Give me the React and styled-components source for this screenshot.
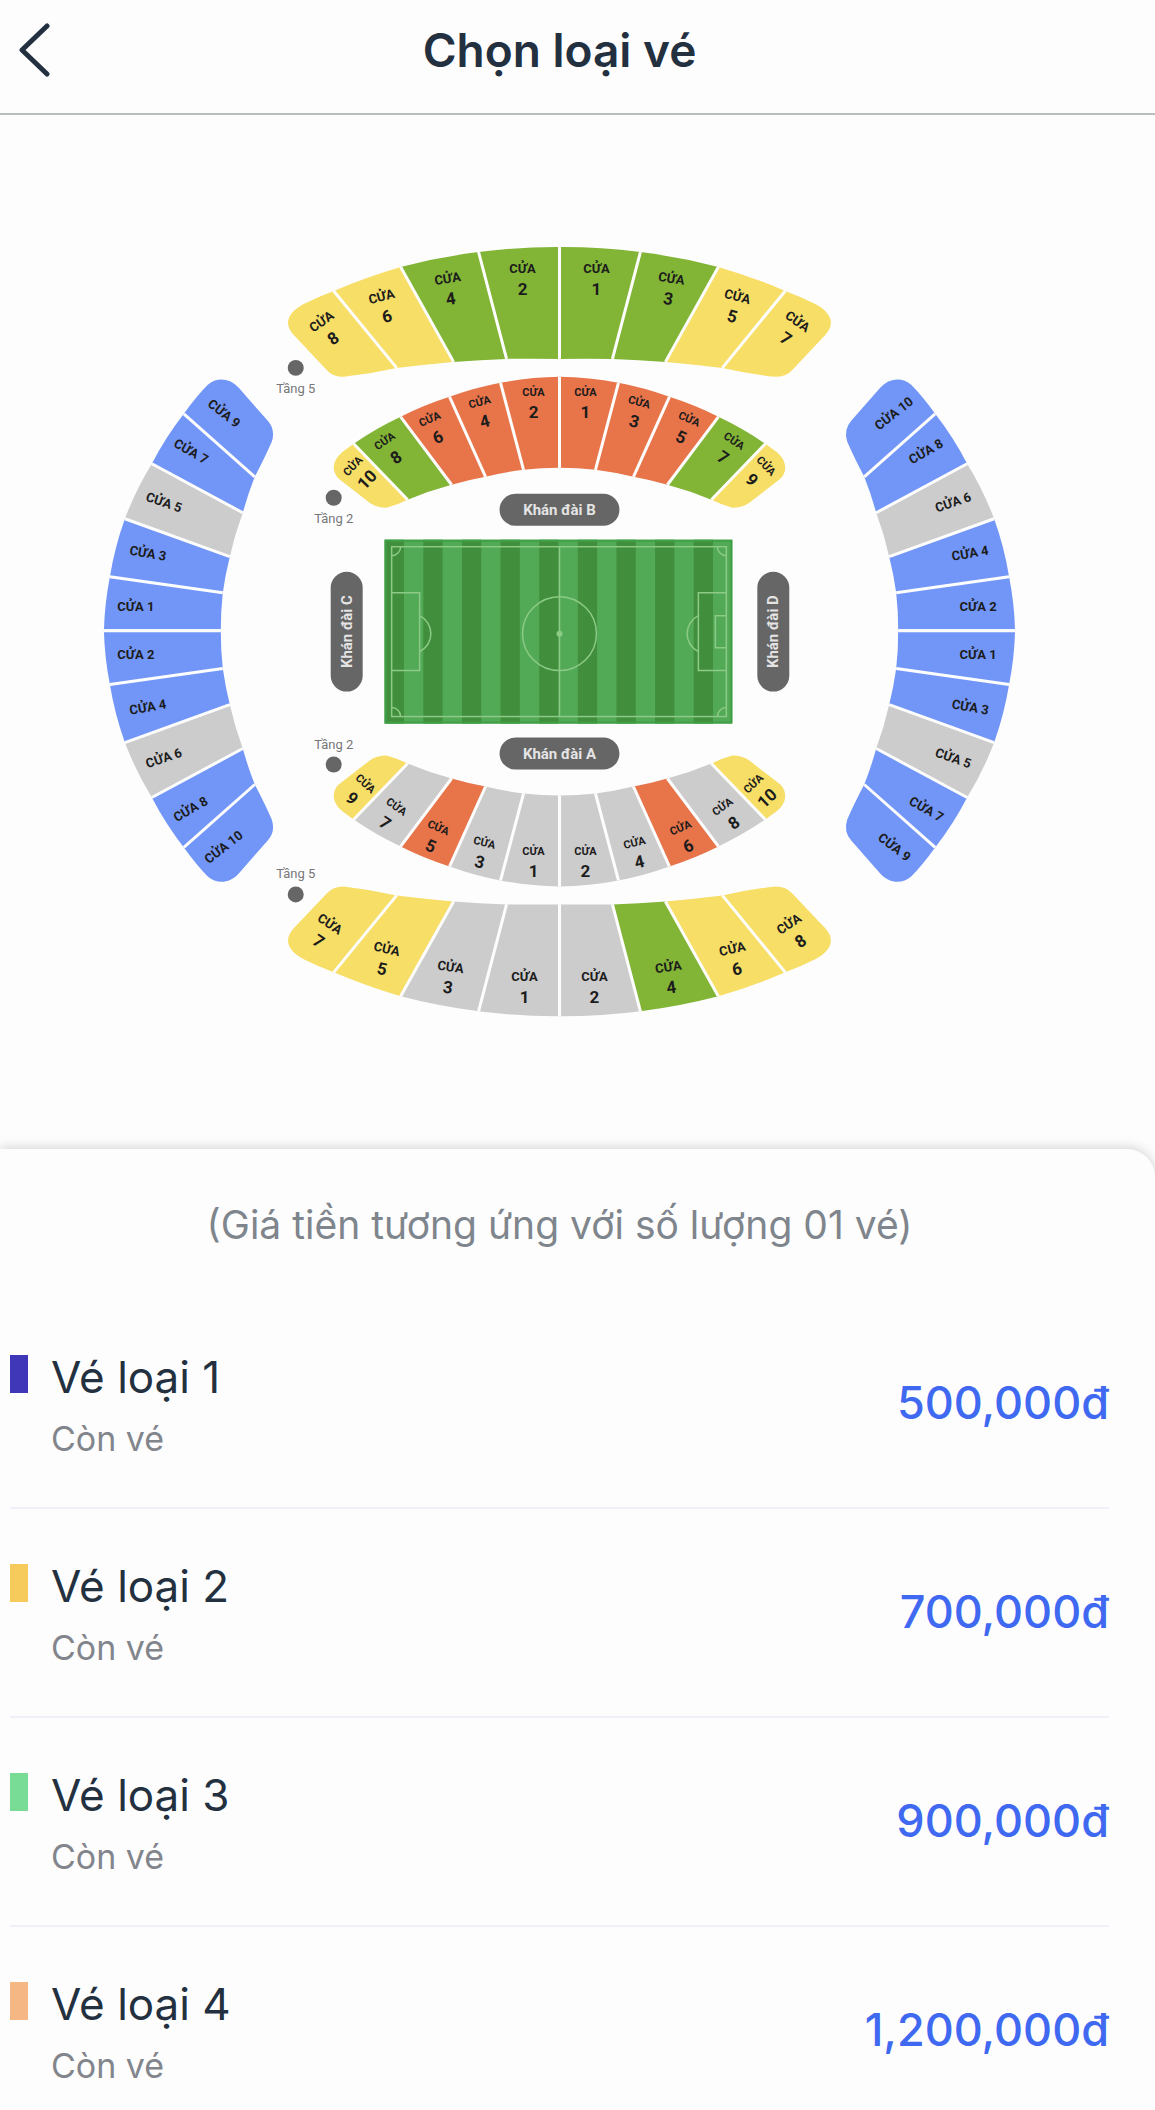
import React from "react";
import styled, { createGlobalStyle } from "styled-components";

const GREEN = "#82b536";
const YELLOW = "#f7de67";
const ORANGE = "#e8744a";
const BLUE = "#7296f7";
const GREY = "#cccccc";

const tickets = [
  { name: "Vé loại 1", status: "Còn vé", price: "500,000đ", color: "#3f37b8" },
  { name: "Vé loại 2", status: "Còn vé", price: "700,000đ", color: "#f6cb5c" },
  { name: "Vé loại 3", status: "Còn vé", price: "900,000đ", color: "#78dc96" },
  { name: "Vé loại 4", status: "Còn vé", price: "1,200,000đ", color: "#f5b783" },
];

// Every shape holds the left (or top left) half of a stand, around the
// centre of the pitch. The other halves are its mirror images.
const outerStand = {
  outer: [[0, -385], [-81, -380], [-159, -365], [-226, -341]],
  inner: [[0, -273], [-53, -273], [-106, -270], [-163, -264]],
  outerR: 610,
  innerR: 1700,
  end: "M-226 -341 Q-242 -335 -256 -328 C-271 -320 -277 -309 -266 -297 L-233 -262 Q-227 -255 -216 -255 Q-190 -258 -163 -264 Z",
};

const innerStand = {
  outer: [[0, -255], [-59, -249], [-110, -235], [-159, -215], [-206, -188]],
  inner: [[0, -164], [-36, -162], [-74, -155], [-108, -147], [-152, -132]],
  outerR: 330,
  innerR: 350,
  end: "M-206 -188 L-217 -180 C-227 -172 -229 -161 -221 -153 L-190 -129 Q-183 -124 -173 -124 Q-162 -127 -152 -132 Z",
};

const sideStand = {
  outer: [[-456, 0], [-450, -54], [-435, -112], [-408, -167], [-376, -217]],
  inner: [[-339, 0], [-337, -38], [-330, -74], [-317, -118], [-305, -154]],
  outerR: 325,
  innerR: 340,
  end: "M-376 -217 Q-363 -235 -352 -246 C-343 -254 -330 -253 -321 -243 L-292 -210 Q-284 -201 -288 -189 Q-295 -173 -305 -154 Z",
};

// Label slots, from the middle outwards: x, y, rotation
const outerTopSlots = [[-37, -363, 0], [-112, -353, -9], [-178, -335, -15], [-238, -310, -35]];
const innerTopSlots = [[-26, -240, 0], [-80, -230, -15], [-130, -213, -24], [-175, -191, -34], [-207, -166, -46]];
const outerBottomSlots = [[-35, 346, 0], [-109, 336, 8], [-173, 318, 13], [-230, 293, 34]];
const innerBottomSlots = [[-26, 220, 0], [-75, 211, 14], [-121, 196, 23], [-163, 175, 35], [-194, 152, 43]];
const leftSlots = [[-424, -24, 0], [-412, -77, 10], [-396, -128, 19], [-369, -179, 30], [-336, -217, 38]];
const rightSlots = [[419, -24, 0], [411, -77, -10], [394, -128, -19], [367, -179, -30], [335, -217, -38]];

const quarters = [
  { stand: outerStand, slots: outerTopSlots, gates: [2, 4, 6, 8], colors: [GREEN, GREEN, YELLOW, YELLOW] },
  { stand: outerStand, slots: outerTopSlots, gates: [1, 3, 5, 7], colors: [GREEN, GREEN, YELLOW, YELLOW], right: true },
  { stand: innerStand, slots: innerTopSlots, small: true, gates: [2, 4, 6, 8, 10], colors: [ORANGE, ORANGE, ORANGE, GREEN, YELLOW] },
  { stand: innerStand, slots: innerTopSlots, small: true, gates: [1, 3, 5, 7, 9], colors: [ORANGE, ORANGE, ORANGE, GREEN, YELLOW], right: true },
  { stand: innerStand, slots: innerBottomSlots, small: true, gates: [1, 3, 5, 7, 9], colors: [GREY, GREY, ORANGE, GREY, YELLOW], bottom: true },
  { stand: innerStand, slots: innerBottomSlots, small: true, gates: [2, 4, 6, 8, 10], colors: [GREY, GREY, ORANGE, GREY, YELLOW], bottom: true, right: true },
  { stand: outerStand, slots: outerBottomSlots, gates: [1, 3, 5, 7], colors: [GREY, GREY, YELLOW, YELLOW], bottom: true },
  { stand: outerStand, slots: outerBottomSlots, gates: [2, 4, 6, 8], colors: [GREY, GREEN, YELLOW, YELLOW], bottom: true, right: true },
];

const sideColors = [BLUE, BLUE, GREY, BLUE, BLUE];
const sides = [
  { slots: leftSlots, gates: [1, 3, 5, 7, 9] },
  { slots: leftSlots, gates: [2, 4, 6, 8, 10], bottom: true },
  { slots: rightSlots, gates: [2, 4, 6, 8, 10], right: true },
  { slots: rightSlots, gates: [1, 3, 5, 7, 9], right: true, bottom: true },
];

const floors = [
  { label: "Tầng 5", x: -264, dot: -264, text: -239 },
  { label: "Tầng 2", x: -226, dot: -134, text: -109 },
  { label: "Tầng 2", x: -226, dot: 133, text: 117 },
  { label: "Tầng 5", x: -264, dot: 263, text: 247 },
];

function cellPath({ outer, inner, outerR, innerR }, i, sweep) {
  const [a, b] = [outer[i], outer[i + 1]];
  const [c, d] = [inner[i + 1], inner[i]];
  return `M${a} A${outerR} ${outerR} 0 0 ${sweep} ${b} L${c} A${innerR} ${innerR} 0 0 ${1 - sweep} ${d} Z`;
}

function StandShape({ stand, colors, right, bottom, sweep = 0 }) {
  const last = colors.length - 1;
  return (
    <g transform={`scale(${right ? -1 : 1} ${bottom ? -1 : 1})`}>
      {colors.map((color, i) => (
        <path key={i} fill={color} d={i === last ? stand.end : cellPath(stand, i, sweep)} />
      ))}
      {stand.outer.map(([x, y], i) => (
        <Divider key={i} x1={x} y1={y} x2={stand.inner[i][0]} y2={stand.inner[i][1]} />
      ))}
    </g>
  );
}

function StadiumMap() {
  return (
    <Map viewBox="-560 -400 1120 800" role="img" aria-label="Sơ đồ sân">
      {quarters.map((q, i) => (
        <g key={i}>
          <StandShape {...q} />
          {q.gates.map((gate, n) => {
            const [x, y, angle] = q.slots[n];
            const side = q.right ? -1 : 1;
            return (
              <g key={gate} transform={`translate(${x * side} ${y}) rotate(${angle * side})`}>
                <GateText $small={q.small} y="4">CỬA</GateText>
                <GateNumber y="26">{gate}</GateNumber>
              </g>
            );
          })}
        </g>
      ))}

      <g transform="translate(0 -1)">
        {sides.map((s, i) => (
          <g key={i}>
            <StandShape stand={sideStand} colors={sideColors} right={s.right} bottom={s.bottom} sweep={1} />
            {s.gates.map((gate, n) => {
              const [x, y, angle] = s.slots[n];
              const side = s.bottom ? -1 : 1;
              return (
                <g key={gate} transform={`translate(${x} ${y * side}) rotate(${angle * side})`}>
                  <GateText y="4">{`CỬA ${gate}`}</GateText>
                </g>
              );
            })}
          </g>
        ))}
      </g>

      {floors.map((f) => (
        <g key={f.dot}>
          <circle cx={f.x} cy={f.dot} r="8" fill="#666666" />
          <FloorText x={f.x} y={f.text}>{f.label}</FloorText>
        </g>
      ))}

      <StandName x={0} y={-122} label="Khán đài B" />
      <StandName x={0} y={122} label="Khán đài A" />
      <StandName x={-213} y={0} label="Khán đài C" upright />
      <StandName x={214} y={0} label="Khán đài D" upright />
      <Pitch />
    </Map>
  );
}

function StandName({ x, y, label, upright }) {
  return (
    <g transform={`translate(${x} ${y}) rotate(${upright ? -90 : 0})`}>
      <rect x="-60" y="-16" width="120" height="32" rx="16" fill="#666666" />
      <StandText y="5">{label}</StandText>
    </g>
  );
}

function Pitch() {
  const stripe = 348 / 18;
  return (
    <g transform="translate(-175 -92)">
      <rect width="348" height="184" fill="#52aa57" />
      {Array.from({ length: 9 }, (_, i) => (
        <rect key={i} x={i * 2 * stripe} width={stripe} height="184" fill="#418f3c" />
      ))}
      <rect x="1" y="1" width="346" height="182" fill="none" stroke="#3fa046" strokeWidth="2" />
      <g fill="none" stroke="#8cca86" strokeWidth="1.5">
        <rect x="7" y="7" width="335" height="170" />
        <path d="M175 7V177" />
        <circle cx="175" cy="94" r="37" />
        <path d="M7 53H35V131H7M35 76A20 20 0 0 1 35 112" />
        <path d="M342 53H314V131H342M314 76A20 20 0 0 0 314 112M342 76H331V108H342" />
        <path d="M16 7A9 9 0 0 1 7 16M333 7A9 9 0 0 0 342 16M16 177A9 9 0 0 0 7 168M333 177A9 9 0 0 1 342 168" />
      </g>
      <circle cx="175" cy="94" r="3" fill="#8cca86" />
    </g>
  );
}

function App() {
  return (
    <Page>
      <GlobalStyle />
      <Header>
        <BackButton type="button" aria-label="Quay lại">
          <svg width="32" height="54" viewBox="0 0 32 54" fill="none" stroke="#233040" strokeWidth="5" strokeLinecap="round" strokeLinejoin="round">
            <path d="M29 3L4 27L29 51" />
          </svg>
        </BackButton>
        <Title>Chọn loại vé</Title>
      </Header>
      <MapSection>
        <StadiumMap />
      </MapSection>
      <Sheet>
        <Note>(Giá tiền tương ứng với số lượng 01 vé)</Note>
        <TicketList>
          {tickets.map((ticket) => (
            <Ticket key={ticket.name}>
              <Swatch $color={ticket.color} />
              <TicketInfo>
                <TicketName>{ticket.name}</TicketName>
                <TicketStatus>{ticket.status}</TicketStatus>
              </TicketInfo>
              <Price>{ticket.price}</Price>
            </Ticket>
          ))}
        </TicketList>
      </Sheet>
    </Page>
  );
}

export default App;


const GlobalStyle = createGlobalStyle`
  * {
    box-sizing: border-box;
  }

  body {
    margin: 0;
    background-color: #fdfdfe;
    font-family: Inter, "Liberation Sans", sans-serif;
    color: #233040;
  }
`;

const Page = styled.div`
  display: flex;
  flex-direction: column;
  min-height: 100vh;
`;

const Header = styled.header`
  display: grid;
  grid-template-columns: 1fr auto 1fr;
  align-items: center;
  padding: 22px 36px 35px 0;
  border-bottom: 2px solid #b8bebe;
`;

const BackButton = styled.button`
  display: flex;
  justify-self: start;
  margin-left: 18px;
  padding: 0;
  border: none;
  background: none;
  cursor: pointer;
`;

const Title = styled.h1`
  margin: 0;
  font-size: 46px;
  font-weight: 600;
  line-height: 56px;
`;

const MapSection = styled.section`
  padding: 117px 36px 118px 0;
`;

const Map = styled.svg`
  display: block;
  width: 100%;
  height: auto;
  font-family: Roboto, "Liberation Sans", sans-serif;
  text-anchor: middle;
`;

const Divider = styled.line`
  stroke: #fdfdfe;
  stroke-width: 3px;
`;

const GateText = styled.text`
  font-size: ${(props) => (props.$small ? "11px" : "13px")};
  font-weight: 700;
  fill: #1c1c1c;
`;

const GateNumber = styled.text`
  font-size: 17px;
  font-weight: 700;
  fill: #1c1c1c;
`;

const FloorText = styled.text`
  font-size: 13px;
  fill: #777777;
`;

const StandText = styled.text`
  font-size: 15px;
  font-weight: 700;
  fill: #e4e4e4;
`;

const Sheet = styled.section`
  flex: 1;
  padding: 52px 46px 0 10px;
  border-radius: 0 28px 0 0;
  background-color: #fdfdfe;
  box-shadow: 0 -2px 12px rgba(0, 0, 0, 0.16);
`;

const Note = styled.p`
  margin: 0 0 51px;
  font-size: 39px;
  line-height: 48px;
  text-align: center;
  color: #7f858c;
`;

const TicketList = styled.ul`
  margin: 0;
  padding: 0;
  list-style: none;
`;

const Ticket = styled.li`
  display: flex;
  align-items: center;
  padding: 49px 0 46px;
  border-bottom: 2px solid #f0f0f8;

  &:last-child {
    padding-bottom: 21px;
    border-bottom: none;
  }
`;

const Swatch = styled.span`
  align-self: flex-start;
  width: 18px;
  height: 38px;
  margin-top: 6px;
  background-color: ${(props) => props.$color};
`;

const TicketInfo = styled.div`
  display: grid;
  flex: 1;
  gap: 12px;
  margin-left: 23px;
`;

const TicketName = styled.span`
  font-size: 44px;
  line-height: 56px;
`;

const TicketStatus = styled.span`
  font-size: 34px;
  line-height: 44px;
  color: #82868c;
`;

const Price = styled.span`
  padding-bottom: 4px;
  font-size: 45px;
  font-weight: 500;
  line-height: 56px;
  color: #3f69f0;
`;
